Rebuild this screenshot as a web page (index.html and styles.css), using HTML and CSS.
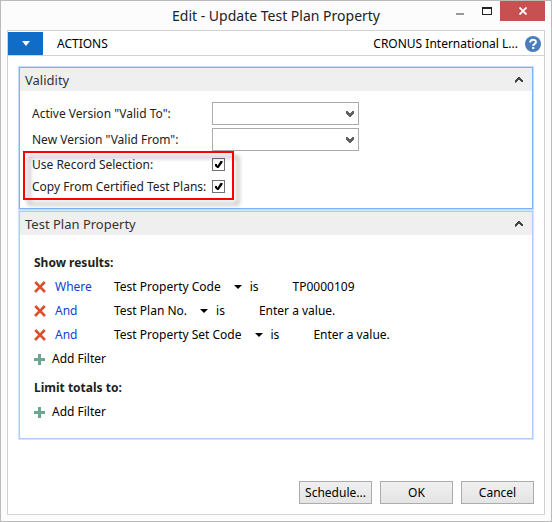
FILE: index.html
```html
<!DOCTYPE html>
<html lang="en">
<head>
<meta charset="utf-8">
<title>Edit - Update Test Plan Property</title>
<link rel="stylesheet" href="styles.css">
</head>
<body>
<svg class="defs" aria-hidden="true">
  <symbol id="check" viewBox="0 0 13 13"><path d="M3 6h2v1l.5.800L8.500 3h2v1.500L6.600 10H5.200L3 8z" fill="#000"/></symbol>
  <symbol id="down" viewBox="0 0 8 6"><path d="M0 0h2v1h1v1h2V1h1V0h2v3H7v1H6v1H5v1H3V5H2V4H1V3H0z" fill="#606060"/></symbol>
  <symbol id="up" viewBox="0 0 8 6"><path d="M0 6V3h1V2h1V1h1V0h2v1h1v1h1v1h1v2H6V4H5V3H3v1H2v1z" fill="#444"/></symbol>
  <symbol id="arrow" viewBox="0 0 8 4"><path d="M0 0h8L4 4z" fill="#000"/></symbol>
  <symbol id="remove" viewBox="0 0 12 12"><path d="M1.2 1l9.800 10M10.800 1L1 11" stroke="#d9532f" stroke-width="2.600" fill="none"/></symbol>
  <symbol id="plus" viewBox="0 0 12 12"><path d="M5.500 1v11M0 6.500h11" stroke="#69a88f" stroke-width="3" fill="none"/></symbol>
</svg>
<div class="window">
  <header class="titlebar">
    <h1 class="title">Edit - Update Test Plan Property</h1>
    <div class="controls">
      <button class="control" aria-label="Minimize"><svg width="8" height="2"><path d="M0 0h8v2H0z" fill="#999"/></svg></button>
      <button class="control" aria-label="Maximize"><svg width="10" height="8"><path d="M0 0h10v8H0zM1 2v5h8V2z" fill="#222" fill-rule="evenodd"/></svg></button>
      <button class="control close" aria-label="Close"><svg width="8" height="8" viewBox="0 0 8 8"><path d="M.5.5l7 7M7.500.5l-7 7" stroke="#fff" stroke-width="1.8"/></svg></button>
    </div>
  </header>
  <main class="client">
    <nav class="ribbon">
      <button class="app-menu" aria-label="Application menu"><svg width="8" height="5"><path d="M0 0h8L4 5z" fill="#fff"/></svg></button>
      <button class="tab">ACTIONS</button>
      <span class="company">CRONUS International L...</span>
      <button class="help" aria-label="Help"><svg width="16" height="16" viewBox="0 0 16 16"><circle cx="8" cy="8" r="8" fill="#4a7ebb"/><path d="M5.200 6.400C5.200 2.700 10.900 2.900 10.900 6c0 2-2.700 2-2.700 4" fill="none" stroke="#fff" stroke-width="2"/><path d="M7.100 11h2.200v2H7.100z" fill="#fff"/></svg></button>
    </nav>
    <div class="content">
      <section class="panel active">
        <button class="panel-head">Validity<svg width="8" height="6"><use href="#up"/></svg></button>
        <div class="form">
          <div class="field">
            <label for="valid-to">Active Version "Valid To":</label>
            <span class="combo"><select id="valid-to"><option></option></select><svg width="8" height="6"><use href="#down"/></svg></span>
          </div>
          <div class="field">
            <label for="valid-from">New Version "Valid From":</label>
            <span class="combo"><select id="valid-from"><option></option></select><svg width="8" height="6"><use href="#down"/></svg></span>
          </div>
          <div class="highlight">
            <div class="tick-row">
              <label for="use-selection">Use Record Selection:</label>
              <span class="tick"><input type="checkbox" id="use-selection" checked><svg width="13" height="13"><use href="#check"/></svg></span>
            </div>
            <div class="tick-row">
              <label for="copy-certified">Copy From Certified Test Plans:</label>
              <span class="tick"><input type="checkbox" id="copy-certified" checked><svg width="13" height="13"><use href="#check"/></svg></span>
            </div>
          </div>
        </div>
      </section>
      <section class="panel">
        <button class="panel-head">Test Plan Property<svg width="8" height="6"><use href="#up"/></svg></button>
        <div class="filters">
          <h2 class="subhead">Show results:</h2>
          <div class="filter">
            <button class="remove" aria-label="Remove filter"><svg width="12" height="12"><use href="#remove"/></svg></button>
            <a class="join" href="#">Where</a>
            <button class="pick">Test Property Code<svg width="8" height="4"><use href="#arrow"/></svg></button>
            <span class="is">is</span>
            <span>TP0000109</span>
          </div>
          <div class="filter">
            <button class="remove" aria-label="Remove filter"><svg width="12" height="12"><use href="#remove"/></svg></button>
            <a class="join" href="#">And</a>
            <button class="pick">Test Plan No.<svg width="8" height="4"><use href="#arrow"/></svg></button>
            <span class="is">is</span>
            <span>Enter a value.</span>
          </div>
          <div class="filter">
            <button class="remove" aria-label="Remove filter"><svg width="12" height="12"><use href="#remove"/></svg></button>
            <a class="join" href="#">And</a>
            <button class="pick">Test Property Set Code<svg width="8" height="4"><use href="#arrow"/></svg></button>
            <span class="is">is</span>
            <span>Enter a value.</span>
          </div>
          <button class="add"><svg width="12" height="12"><use href="#plus"/></svg>Add Filter</button>
          <h2 class="subhead limit">Limit totals to:</h2>
          <button class="add"><svg width="12" height="12"><use href="#plus"/></svg>Add Filter</button>
        </div>
      </section>
    </div>
    <footer class="actions">
      <button class="action">Schedule...</button>
      <button class="action">OK</button>
      <button class="action">Cancel</button>
    </footer>
  </main>
</div>
</body>
</html>
```
FILE: styles.css
```css
* { box-sizing: border-box; }

body {
  margin: 0;
  font: 12px/16px "Noto Sans", sans-serif;
  color: #222;
}

button {
  margin: 0;
  padding: 0;
  border: 0;
  background: none;
  font: inherit;
  color: #000;
}

svg { display: block; flex: none; }
.defs { display: none; }

.window {
  display: flex;
  flex-direction: column;
  min-height: 100vh;
  padding: 0 6px 6px;
  border: 1px solid #bbb;
  background: #fcfcfc;
}

.titlebar {
  display: grid;
  grid-template-columns: 1fr auto 1fr;
  height: 29px;
}

.title {
  grid-column: 2;
  margin: 0;
  font-size: 14px;
  font-weight: 400;
  line-height: 29px;
  white-space: nowrap;
}

.controls { display: flex; justify-content: flex-end; align-items: flex-start; }

.control {
  display: flex;
  align-items: center;
  justify-content: center;
  width: 27px;
  height: 20px;
}

.control:first-child { padding-top: 6px; }
.close { width: 45px; background: #c75050; }

.client {
  flex: 1;
  display: flex;
  flex-direction: column;
  border: 1px solid #d2d2d2;
  background: #fff;
}

.ribbon {
  display: flex;
  align-items: center;
  height: 25px;
  padding: 1px 3px 0 0;
  border-bottom: 1px solid #d2d2d2;
}

.app-menu {
  display: flex;
  align-items: center;
  justify-content: center;
  align-self: stretch;
  width: 35px;
  background: #0f6cc7;
}

.tab { margin-left: 14px; }
.company { margin-left: auto; color: #000; }
.help { margin-left: 7px; }

.content { padding: 10px 10px 0; }

.panel {
  border: 1px solid #aaccff;
  outline: 1px solid #d6e5fd;
  margin: 1px 1px 2px;
}

.panel.active { border-color: #7fb0fb; outline-color: #c6dcfc; }

.panel-head {
  display: flex;
  align-items: center;
  justify-content: space-between;
  width: 100%;
  height: 23px;
  padding: 0 9px 0 5px;
  background: #efefef;
  font-size: 13px;
  color: #333;
}

.form {
  display: flex;
  flex-direction: column;
  gap: 3px;
  padding: 11px 12px;
}

.field, .tick-row {
  display: grid;
  grid-template-columns: 180px 147px;
  align-items: center;
}

.combo { display: grid; align-items: center; }
.combo > *, .tick > * { grid-area: 1 / 1; }
.combo svg { justify-self: end; margin-right: 5px; pointer-events: none; }

select {
  appearance: none;
  width: 100%;
  height: 23px;
  border: 1px solid #ababab;
  border-radius: 0;
  background: #fff;
}

.highlight {
  position: relative;
  display: flex;
  flex-direction: column;
  gap: 1px;
  width: 193px;
}

.highlight::after {
  content: "";
  position: absolute;
  inset: -3px -9px;
  border: 2px solid #f00;
  filter: drop-shadow(5px 5px 2px rgba(0, 0, 0, .35));
  pointer-events: none;
}

.tick-row { height: 21px; white-space: nowrap; }
.tick { display: grid; }
.tick svg { pointer-events: none; }

.tick input {
  appearance: none;
  width: 13px;
  height: 13px;
  margin: 0;
  border: 1px solid #707070;
  background: #fff;
}

.filters { padding: 16px 12px 14px 14px; line-height: 24px; color: #000; }

.subhead {
  margin: 0;
  font-size: 12px;
  line-height: 24px;
  color: #222;
}

.limit { margin-top: 5px; }

.filter { display: flex; align-items: center; height: 24px; }
.remove { width: 21px; }
.join { width: 59px; color: #1240d0; text-decoration: none; }
.pick { display: flex; align-items: center; gap: 13px; }
.is { margin: 0 34px 0 8px; }
.add { display: flex; align-items: center; gap: 6px; }

.actions {
  display: flex;
  justify-content: flex-end;
  gap: 8px;
  margin-top: auto;
  padding: 10px;
}

.action {
  width: 73px;
  height: 23px;
  border: 1px solid #acacac;
  background: linear-gradient(#f0f0f0, #e4e4e4);
}
```
